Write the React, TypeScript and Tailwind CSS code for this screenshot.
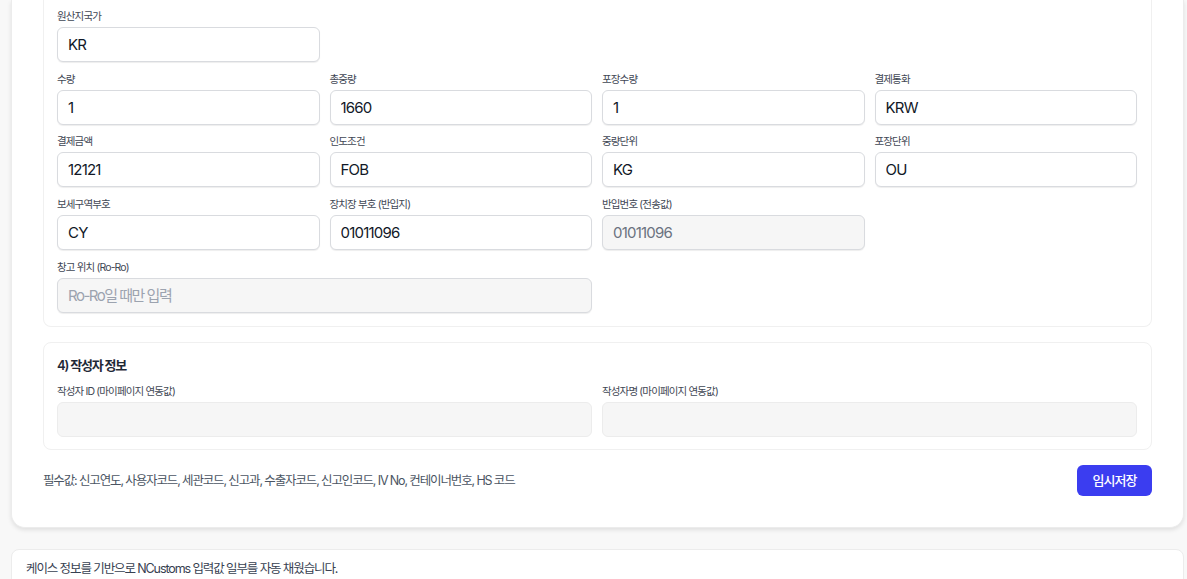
const font = { fontFamily: '"Inter", "Noto Sans CJK KR", sans-serif' };

type FieldProps = {
  label: string;
  value?: string;
  placeholder?: string;
  disabled?: boolean;
  soft?: boolean;
  className?: string;
};

const Field = ({ label, value = '', placeholder, disabled, soft, className = '' }: FieldProps) => (
  <div className={`flex flex-col ${className}`}>
    <label className="text-[10.5px] leading-[16px] tracking-[-0.85px] text-[#3f4754] mb-[2px]">{label}</label>
    <input
      readOnly
      value={value}
      placeholder={placeholder}
      className={`h-[35px] w-full rounded-[6px] border px-[10px] text-[15px] outline-none placeholder:text-[#9ca3af] ${
        value ? 'tracking-[-0.8px]' : 'tracking-[-1.5px]'
      } ${soft ? 'border-[#ececec]' : 'border-[#d9dbdf] shadow-[0_1px_1px_rgba(0,0,0,0.07)]'} ${
        disabled ? 'bg-[#f6f6f6] text-[#6b7280]' : 'bg-white text-[#111827]'
      }`}
    />
  </div>
);

const App = () => {
  return (
    <div style={font} className="h-[579px] overflow-hidden bg-[#f8f8f8] pl-[11px] pr-[3px]">
      <div className="rounded-b-[14px] border-x border-b border-[#ececec] bg-white px-[31px] pb-[31px] shadow-[0_2px_4px_rgba(0,0,0,0.1)]">
        <div className="rounded-b-[8px] border-x border-b border-[#f0f0f0] pl-[13px] pr-[14px] pt-[9px] pb-[13px]">
          <div className="grid grid-cols-4 gap-x-[10px] gap-y-[9.7px]">
            <Field label="원산지국가" value="KR" />
            <div className="col-span-3" />
            <Field label="수량" value="1" />
            <Field label="총중량" value="1660" />
            <Field label="포장수량" value="1" />
            <Field label="결제통화" value="KRW" />
            <Field label="결제금액" value="12121" />
            <Field label="인도조건" value="FOB" />
            <Field label="중량단위" value="KG" />
            <Field label="포장단위" value="OU" />
            <Field label="보세구역부호" value="CY" />
            <Field label="장치장 부호 (반입지)" value="01011096" />
            <Field label="반입번호 (전송값)" value="01011096" disabled />
            <div />
            <Field label="창고 위치 (Ro-Ro)" placeholder="Ro-Ro일 때만 입력" disabled className="col-span-2" />
          </div>
        </div>

        <div className="mt-[15px] rounded-[8px] border border-[#f0f0f0] pl-[13px] pr-[14px] pt-[12px] pb-[12px]">
          <h3 className="text-[13px] leading-[20px] font-semibold tracking-[-1.2px] text-[#1f2937] mb-[9px]">4) 작성자 정보</h3>
          <div className="grid grid-cols-2 gap-x-[10px]">
            <Field label="작성자 ID (마이페이지 연동값)" disabled soft />
            <Field label="작성자명 (마이페이지 연동값)" disabled soft />
          </div>
        </div>

        <div className="mt-[15px] flex items-center justify-between">
          <p className="pt-[2px] text-[12.5px] tracking-[-1.13px] text-[#4b5563]">
            필수값: 신고연도, 사용자코드, 세관코드, 신고과, 수출자코드, 신고인코드, IV No, 컨테이너번호, HS 코드
          </p>
          <button className="h-[31px] w-[75px] rounded-[6px] bg-[#3b3df0] text-[13px] font-medium tracking-[-0.9px] text-white">
            임시저장
          </button>
        </div>
      </div>

      <div className="mt-[21px] rounded-[8px] border border-[#ececec] bg-white px-[14px] pt-[10px] pb-[9px]">
        <p className="text-[12.5px] tracking-[-1.1px] text-[#374151]">케이스 정보를 기반으로 NCustoms 입력값 일부를 자동 채웠습니다.</p>
      </div>
    </div>
  );
};

export default App;
